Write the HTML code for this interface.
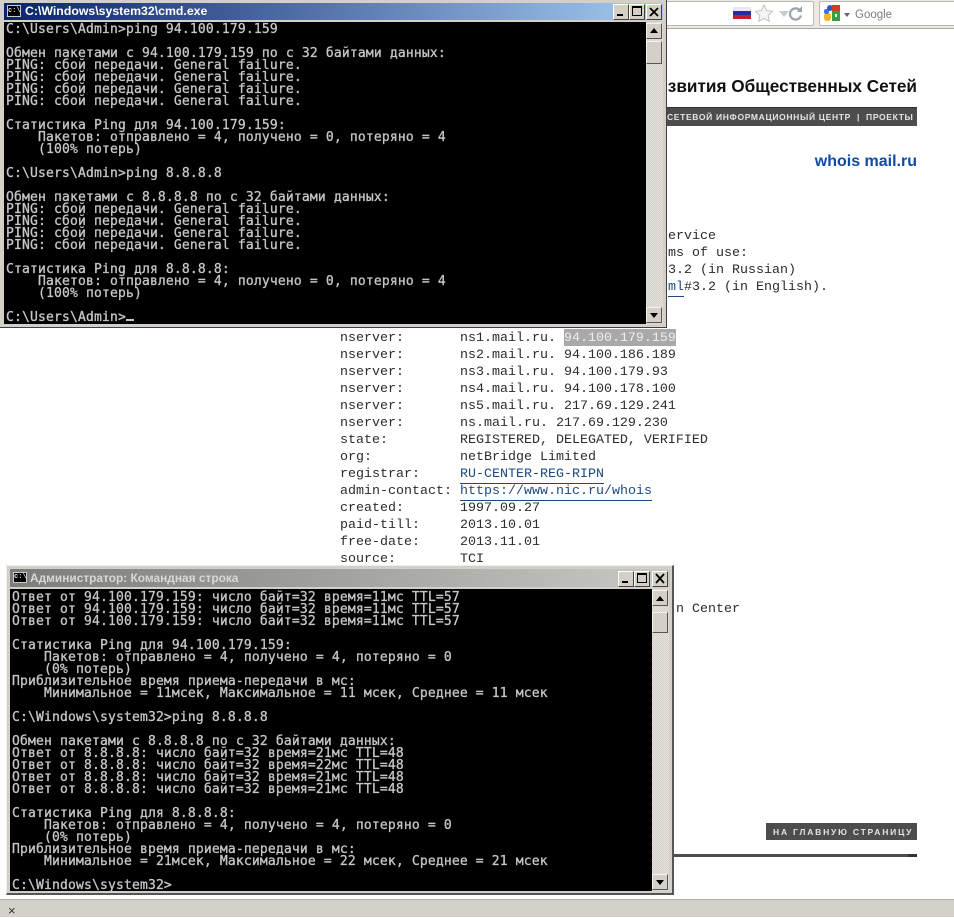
<!DOCTYPE html>
<html><head><meta charset="utf-8"><style>
html,body{margin:0;padding:0;width:954px;height:917px;overflow:hidden;background:#fff;font-family:"Liberation Sans",sans-serif}
.a{position:absolute}
.term{position:absolute;font-family:"DejaVu Sans Mono",monospace;font-size:13px;letter-spacing:.17px;line-height:12px;color:#c6c6c6;white-space:pre;margin:0;-webkit-text-stroke:.3px #c6c6c6}
.w{position:absolute;color:#2c2c2c;font-family:"Liberation Mono",monospace;font-size:13.33px;line-height:17px;white-space:pre;margin:0}
.w a{color:#1c4a80;border-bottom:1px solid #1c4a80;padding-bottom:1px}
.btn{position:absolute;width:14px;height:14px;background:#d4d0c8;border:1px solid;border-color:#fff #404040 #404040 #fff;box-sizing:content-box}
.sb{position:absolute;background-color:#e6e4de;background-image:linear-gradient(45deg,#d4d0c8 25%,transparent 25%,transparent 75%,#d4d0c8 75%),linear-gradient(45deg,#d4d0c8 25%,transparent 25%,transparent 75%,#d4d0c8 75%);background-size:2px 2px;background-position:0 0,1px 1px}
.sq{position:absolute;background:#d4d0c8;border:1px solid;border-color:#f4f4f0 #555 #555 #f4f4f0;box-sizing:border-box}
.tri{position:absolute;width:0;height:0;border-left:4px solid transparent;border-right:4px solid transparent}
</style></head><body>

<!-- browser toolbar -->
<div class="a" style="left:660px;top:0;width:294px;height:28px;background:#ece9e2;border-bottom:1px solid #a8a8a2"></div>
<div class="a" style="left:660px;top:1px;width:152px;height:23px;background:#fff;border:1px solid #b8b8b4;border-radius:2px"></div>
<div class="a" style="left:733px;top:7px;width:18px;height:4px;background:#e8e8f0"></div>
<div class="a" style="left:733px;top:11px;width:18px;height:4px;background:#1f2fa0"></div>
<div class="a" style="left:733px;top:15px;width:18px;height:4px;background:#c02030"></div>
<svg class="a" style="left:755px;top:4px" width="50" height="20" viewBox="0 0 50 20"><path d="M9 1l2.600 5.600 6 .7-4.400 4.100 1.200 6L9 14.400l-5.400 3 1.200-6L.4 7.300l6-.7z" fill="#f4f4f4" stroke="#c4c4c4"/><path d="M24 7h10l-5 6z" fill="#c4ccd0"/><path d="M50 5.500a5.600 5.600 0 1 0 1 5" fill="none" stroke="#9aa4a8" stroke-width="2.200" transform="translate(-5 1)"/><path d="M47 2v6h-5z" fill="#9aa4a8"/></svg>
<div class="a" style="left:819px;top:1px;width:135px;height:23px;background:#fff;border:1px solid #b8b8b4;border-right:0;border-radius:2px 0 0 2px"></div>
<svg class="a" style="left:824px;top:5px" width="16" height="16" viewBox="0 0 16 16"><rect x="0" y="8" width="7" height="8" rx="3" fill="#f0b428"/><rect x="0" y="4" width="5" height="5" rx="2" fill="#3c78d8"/><rect x="3" y="0" width="6" height="6" rx="3" fill="#2a5cc0"/><rect x="8" y="0" width="8" height="6" fill="#d83828"/><rect x="8" y="6" width="8" height="10" fill="#38a040"/><rect x="11" y="9" width="2" height="3" fill="#fff"/></svg>
<div class="tri" style="left:844px;top:13px;border-top:4px solid #666;border-left-width:3px;border-right-width:3px"></div>
<div class="a" style="left:855px;top:8px;font-size:11.500px;line-height:14px;color:#7c7c7c">Google</div>

<!-- page -->
<div class="a" style="left:660px;top:75px;width:257px;text-align:right;font-size:17.200px;line-height:22px;font-weight:bold;color:#111;white-space:nowrap;overflow:hidden">звития Общественных Сетей</div>
<div class="a" style="left:660px;top:107px;width:257px;height:19px;background:#4d4d4d;border-top:1px solid #333;box-sizing:border-box"></div>
<div class="a" style="left:667px;top:111px;font-size:8.500px;line-height:12px;font-weight:bold;letter-spacing:.66px;color:#e4e4e4;white-space:pre">СЕТЕВОЙ ИНФОРМАЦИОННЫЙ ЦЕНТР  |  ПРОЕКТЫ</div>
<div class="a" style="left:760px;top:152px;width:157px;text-align:right;font-size:16px;line-height:20px;font-weight:bold;color:#0f4aa5">whois mail.ru</div>

<div class="w" style="left:668px;top:228px">ervice
ms of use:
3.2 (in Russian)
<a>ml</a>#3.2 (in English).</div>

<div class="a" style="left:564px;top:329px;width:112px;height:17px;background:#a9a9a9"></div>
<div class="w" style="left:340px;top:330px">nserver:       ns1.mail.ru. <span style="color:#eee">94.100.179.159</span>
nserver:       ns2.mail.ru. 94.100.186.189
nserver:       ns3.mail.ru. 94.100.179.93
nserver:       ns4.mail.ru. 94.100.178.100
nserver:       ns5.mail.ru. 217.69.129.241
nserver:       ns.mail.ru. 217.69.129.230
state:         REGISTERED, DELEGATED, VERIFIED
org:           netBridge Limited
registrar:     <a>RU-CENTER-REG-RIPN</a>
admin-contact: <a>https://www.nic.ru/whois</a>
created:       1997.09.27
paid-till:     2013.10.01
free-date:     2013.11.01
source:        TCI</div>
<div class="w" style="left:676px;top:601px">n Center</div>

<div class="a" style="left:766px;top:823px;width:151px;height:17px;background:#4d4d4d"></div>
<div class="a" style="left:773px;top:827px;font-size:8.500px;line-height:11px;font-weight:bold;letter-spacing:1.800px;color:#e4e4e4;white-space:pre">НА ГЛАВНУЮ СТРАНИЦУ</div>
<div class="a" style="left:660px;top:854px;width:248px;height:3px;background:#4d4d4d"></div>
<div class="a" style="left:908px;top:854px;width:9px;height:3px;background:#333"></div>

<!-- status bar -->
<div class="a" style="left:0;top:899px;width:954px;height:18px;background:#d4d1c8;border-top:1px solid #b4b2a8;box-sizing:border-box"></div>
<div class="a" style="left:8px;top:904px;font-size:13px;line-height:14px;color:#333">×</div>

<!-- top cmd window -->
<div class="a" style="left:0;top:0;width:667px;height:328px;background:#d4d0c8;border-right:1px solid #404040;border-bottom:1px solid #404040;box-sizing:border-box"></div>
<div class="a" style="left:4px;top:3px;width:659px;height:17px;background:linear-gradient(90deg,#0a246a,#a6caf0)"></div>
<div class="a" style="left:7px;top:5px;width:14px;height:12px;background:#000;border:1px solid #ccc;box-sizing:border-box;color:#ddd;font:bold 7px/10px 'Liberation Mono',monospace;overflow:hidden">c:\</div>
<div class="a" style="left:25px;top:3px;font-size:12.300px;line-height:17px;font-weight:bold;color:#fff;white-space:pre">C:\Windows\system32\cmd.exe</div>
<div class="btn" style="left:613px;top:4px"></div><div class="a" style="left:617px;top:14px;width:6px;height:2px;background:#000"></div>
<div class="btn" style="left:629px;top:4px"></div><div class="a" style="left:632px;top:6px;width:10px;height:10px;border:1px solid #000;border-top-width:2px;box-sizing:border-box"></div>
<div class="btn" style="left:646px;top:4px"></div>
<svg class="a" style="left:649px;top:7px" width="10" height="10"><path d="M1 1l8 8M9 1l-8 8" stroke="#000" stroke-width="1.800"/></svg>
<div class="a" style="left:4px;top:22px;width:642px;height:302px;background:#000;overflow:hidden"><pre class="term" style="left:2px;top:2px">C:\Users\Admin&gt;ping 94.100.179.159

Обмен пакетами с 94.100.179.159 по с 32 байтами данных:
PING: сбой передачи. General failure.
PING: сбой передачи. General failure.
PING: сбой передачи. General failure.
PING: сбой передачи. General failure.

Статистика Ping для 94.100.179.159:
    Пакетов: отправлено = 4, получено = 0, потеряно = 4
    (100% потерь)

C:\Users\Admin&gt;ping 8.8.8.8

Обмен пакетами с 8.8.8.8 по с 32 байтами данных:
PING: сбой передачи. General failure.
PING: сбой передачи. General failure.
PING: сбой передачи. General failure.
PING: сбой передачи. General failure.

Статистика Ping для 8.8.8.8:
    Пакетов: отправлено = 4, получено = 0, потеряно = 4
    (100% потерь)

C:\Users\Admin&gt;<span style="display:inline-block;width:8px;height:2px;background:#c6c6c6"></span></pre></div>
<div class="sb" style="left:646px;top:22px;width:17px;height:302px"></div>
<div class="sq" style="left:646px;top:23px;width:16px;height:16px"></div><div class="tri" style="left:650px;top:28px;border-bottom:5px solid #000"></div>
<div class="sq" style="left:646px;top:41px;width:16px;height:23px"></div>
<div class="sq" style="left:646px;top:307px;width:16px;height:16px"></div><div class="tri" style="left:650px;top:313px;border-top:5px solid #000"></div>

<!-- bottom cmd window -->
<div class="a" style="left:6px;top:565px;width:668px;height:330px;background:#d4d0c8;border:1px solid #eee;border-right:2px solid #555;border-bottom:2px solid #555;box-sizing:border-box"></div>
<div class="a" style="left:10px;top:569px;width:660px;height:18px;background:linear-gradient(90deg,#7c7c7c,#c8c8c4)"></div>
<div class="a" style="left:13px;top:572px;width:14px;height:11px;background:#000;border:1px solid #ccc;box-sizing:border-box;color:#ddd;font:bold 7px/9px 'Liberation Mono',monospace;overflow:hidden">c:\</div>
<div class="a" style="left:30px;top:570px;font-size:11.900px;line-height:17px;font-weight:bold;color:#d8d8d4;white-space:pre">Администратор: Командная строка</div>
<div class="btn" style="left:618px;top:571px"></div><div class="a" style="left:622px;top:581px;width:6px;height:2px;background:#000"></div>
<div class="btn" style="left:634px;top:571px"></div><div class="a" style="left:637px;top:573px;width:10px;height:10px;border:1px solid #000;border-top-width:2px;box-sizing:border-box"></div>
<div class="btn" style="left:652px;top:571px"></div>
<svg class="a" style="left:655px;top:573px" width="10" height="11"><path d="M1 1l8 9M9 1l-8 9" stroke="#000" stroke-width="1.800"/></svg>
<div class="a" style="left:10px;top:589px;width:642px;height:302px;background:#000;overflow:hidden"><pre class="term" style="left:2px;top:3px">Ответ от 94.100.179.159: число байт=32 время=11мс TTL=57
Ответ от 94.100.179.159: число байт=32 время=11мс TTL=57
Ответ от 94.100.179.159: число байт=32 время=11мс TTL=57

Статистика Ping для 94.100.179.159:
    Пакетов: отправлено = 4, получено = 4, потеряно = 0
    (0% потерь)
Приблизительное время приема-передачи в мс:
    Минимальное = 11мсек, Максимальное = 11 мсек, Среднее = 11 мсек

C:\Windows\system32&gt;ping 8.8.8.8

Обмен пакетами с 8.8.8.8 по с 32 байтами данных:
Ответ от 8.8.8.8: число байт=32 время=21мс TTL=48
Ответ от 8.8.8.8: число байт=32 время=22мс TTL=48
Ответ от 8.8.8.8: число байт=32 время=21мс TTL=48
Ответ от 8.8.8.8: число байт=32 время=21мс TTL=48

Статистика Ping для 8.8.8.8:
    Пакетов: отправлено = 4, получено = 4, потеряно = 0
    (0% потерь)
Приблизительное время приема-передачи в мс:
    Минимальное = 21мсек, Максимальное = 22 мсек, Среднее = 21 мсек

C:\Windows\system32&gt;</pre></div>
<div class="sb" style="left:652px;top:589px;width:17px;height:302px"></div>
<div class="sq" style="left:652px;top:590px;width:16px;height:16px"></div><div class="tri" style="left:656px;top:596px;border-bottom:5px solid #000"></div>
<div class="sq" style="left:652px;top:612px;width:16px;height:21px"></div>
<div class="sq" style="left:652px;top:874px;width:16px;height:16px"></div><div class="tri" style="left:656px;top:880px;border-top:5px solid #000"></div>
</body></html>
